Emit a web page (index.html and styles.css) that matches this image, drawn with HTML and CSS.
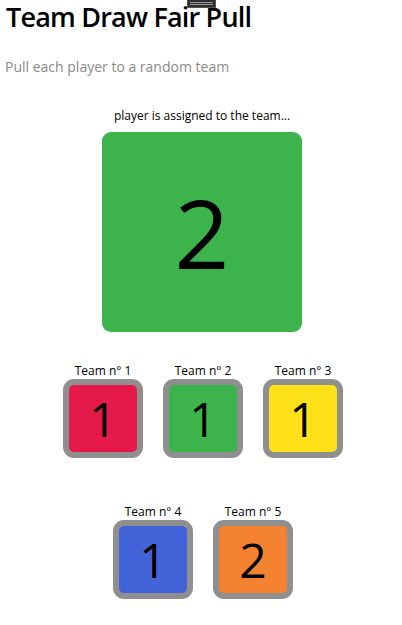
FILE: index.html
```html
<!DOCTYPE html>
<html>
<head>
<meta charset="utf-8">
<link rel="stylesheet" href="styles.css">
</head>
<body>
<div class="handle"><span></span><span></span></div>
<h1 class="title">Team Draw Fair Pull</h1>
<p class="subtitle">Pull each player to a random team</p>
<div class="result">
  <div class="result-label">player is assigned to the team...</div>
  <div class="result-box green">2</div>
</div>
<div class="teams">
  <div class="team"><div class="team-label">Team n° 1</div><div class="team-box red">1</div></div>
  <div class="team"><div class="team-label">Team n° 2</div><div class="team-box green">1</div></div>
  <div class="team"><div class="team-label">Team n° 3</div><div class="team-box yellow">1</div></div>
  <div class="team"><div class="team-label">Team n° 4</div><div class="team-box blue">1</div></div>
  <div class="team"><div class="team-label">Team n° 5</div><div class="team-box orange">2</div></div>
</div>
</body>
</html>
```
FILE: styles.css
```css
* { box-sizing: border-box; }
html, body { margin: 0; padding: 0; background: #fff; }
body {
  font-family: "Open Sans", "Noto Sans", sans-serif;
  color: #000;
  padding: 0 4px 0 6px;
  position: relative;
}
.handle {
  position: absolute;
  left: 187px;
  top: 0;
  width: 29px;
  height: 8px;
  background: #2e2e2e;
  border: 1px solid #555;
  border-top: none;
  display: flex;
  flex-direction: column;
  justify-content: center;
  gap: 1px;
  padding: 0 2px;
  z-index: 2;
}
.handle span { display: block; height: 1px; background: #9a9a9a; }
.title {
  margin: 2px 0 0 0;
  font-size: 27px;
  line-height: 30px;
  font-weight: 600;
  letter-spacing: -0.8px;
}
.subtitle {
  margin: 25px 0 0 -1px;
  font-size: 14px;
  line-height: 19px;
  color: #8a8a8a;
}
.result {
  display: flex;
  flex-direction: column;
  align-items: center;
  margin-top: 32px;
}
.result-label {
  font-size: 12px;
  line-height: 16px;
}
.result-box {
  margin-top: 8px;
  width: 200px;
  height: 200px;
  border-radius: 9px;
  display: flex;
  align-items: center;
  justify-content: center;
  font-size: 96px;
  line-height: 1;
}
.teams {
  margin: 7px auto 0;
  width: 302px;
  padding-left: 2px;
  display: flex;
  flex-wrap: wrap;
  justify-content: center;
}
.team {
  width: 100px;
  margin: 23px 0 22px;
  display: flex;
  flex-direction: column;
  align-items: center;
}
.team-label {
  font-size: 12px;
  line-height: 17px;
}
.team-box {
  width: 80px;
  height: 79px;
  border: 6px solid #8f8f8f;
  border-radius: 11px;
  display: flex;
  align-items: center;
  justify-content: center;
  font-size: 48px;
  line-height: 1;
}
.red { background: #e6194b; }
.green { background: #3cb44b; }
.yellow { background: #ffe119; }
.blue { background: #4363d8; }
.orange { background: #f58231; }
```
